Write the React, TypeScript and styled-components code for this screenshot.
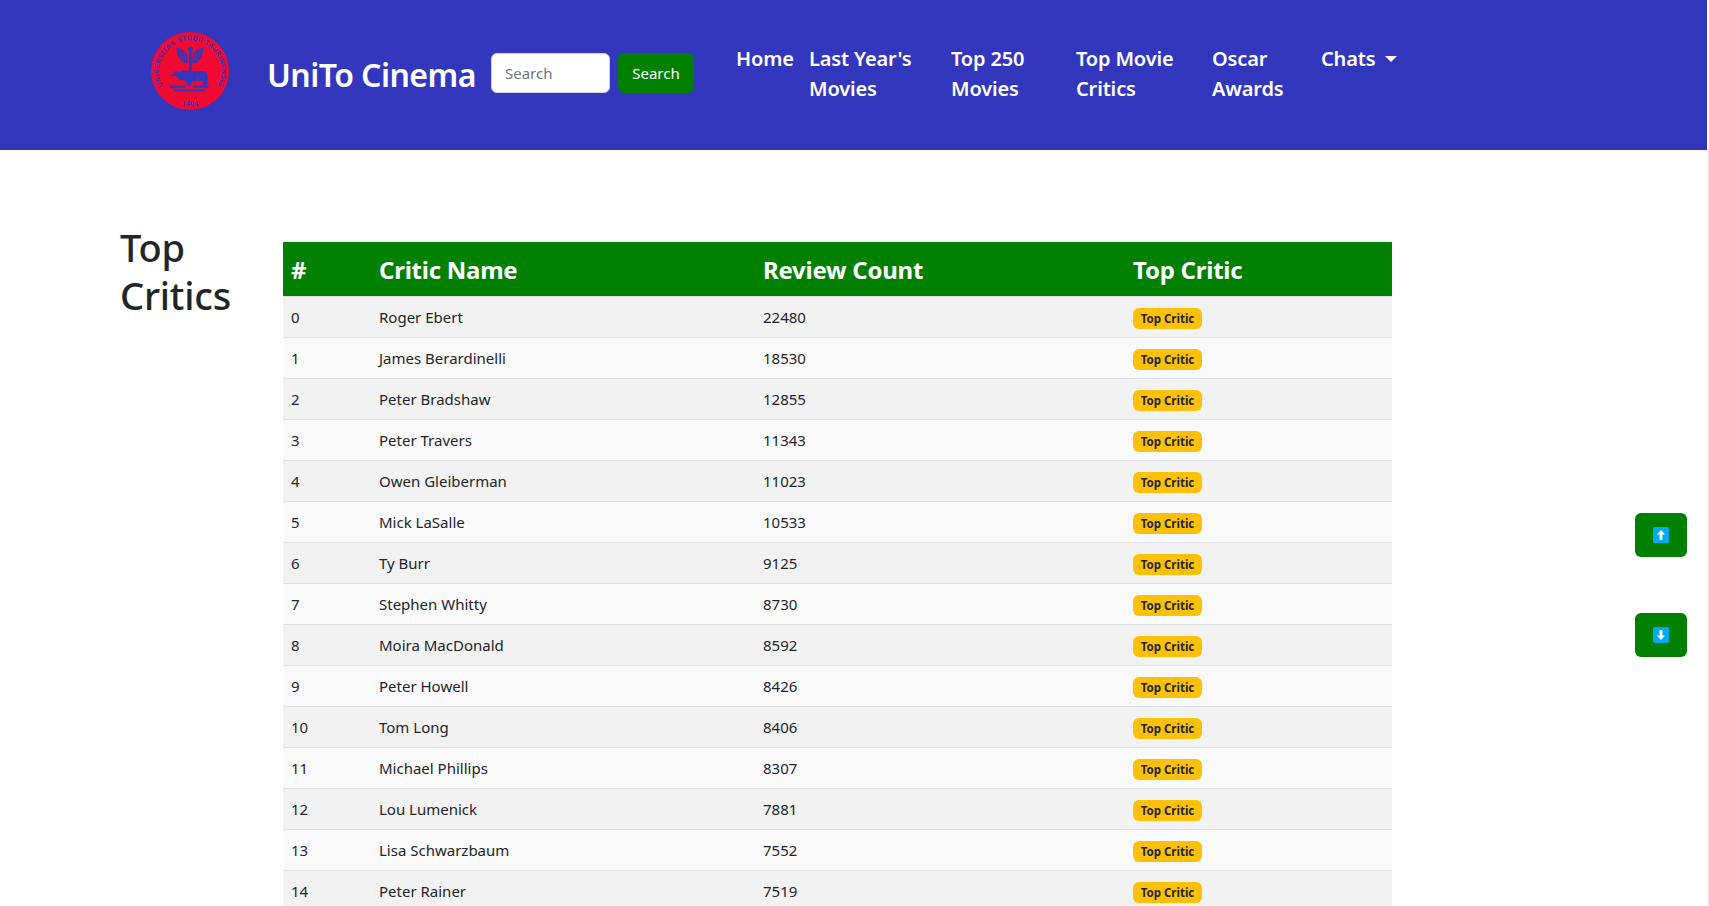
import React from 'react';
import styled, { createGlobalStyle } from 'styled-components';

const FONT = `"Noto Sans", "Open Sans", "Liberation Sans", sans-serif`;

const Global = createGlobalStyle`
  html, body {
    margin: 0;
    height: 906px;
    overflow: hidden;
    background: #fff;
    font-family: ${FONT};
    font-size: 15px;
    line-height: 24px;
    color: #212529;
  }
  * { box-sizing: border-box; }
`;

const Page = styled.div`
  width: 1709px;
  height: 906px;
  overflow: hidden;
`;

const Navbar = styled.nav`
  width: 1707px;
  height: 150px;
  background: #3237bd;
  display: flex;
  align-items: flex-start;
  padding-left: 151px;
`;

const Logo = styled.svg`
  width: 78px;
  height: 78px;
  margin-top: 32px;
  flex: none;
`;

const Brand = styled.a`
  margin: 51px 0 0 38px;
  font-size: 32px;
  line-height: 48px;
  font-weight: 600;
  color: #fff;
  white-space: nowrap;
  width: 224px;
  flex: none;
  letter-spacing: -0.55px;
`;

const SearchForm = styled.form`
  display: flex;
  gap: 8px;
  margin-top: 53px;
  flex: none;
`;

const SearchInput = styled.input`
  width: 119px;
  height: 40px;
  padding: 6px 13px;
  border: 1px solid #ced4da;
  border-radius: 6px;
  font: inherit;
  background: #fff;
  &::placeholder { color: #6c757d; opacity: 1; }
`;

const SearchButton = styled.button`
  width: 76px;
  height: 40px;
  border: 0;
  border-radius: 6px;
  background: #008000;
  color: #fff;
  font: inherit;
  padding: 0;
`;

const NavList = styled.ul`
  list-style: none;
  display: flex;
  margin: 44px 0 0 42px;
  padding: 0;
`;

const NavItem = styled.li<{ $width: number }>`
  width: ${p => p.$width}px;
  font-size: 20px;
  line-height: 30px;
  font-weight: 600;
  letter-spacing: -0.15px;
  color: #fff;
  flex: none;
`;

const Caret = styled.span`
  display: inline-block;
  margin-left: 10px;
  vertical-align: 4px;
  border-top: 6px solid #fff;
  border-left: 6px solid transparent;
  border-right: 6px solid transparent;
`;

const Content = styled.main`
  width: 1709px;
  height: 756px;
  display: flex;
  align-items: flex-start;
  padding: 73px 0 0 120px;
  border-right: 2px solid #f0f0f0;
`;

const Title = styled.h1`
  width: 163px;
  flex: none;
  margin: 0;
  font-size: 38px;
  line-height: 48px;
  font-weight: 500;
  letter-spacing: -0.2px;
`;

const Table = styled.table`
  width: 1109px;
  margin-top: 19px;
  border-collapse: separate;
  border-spacing: 0;
  table-layout: fixed;
`;

const Th = styled.th<{ $width: number }>`
  width: ${p => p.$width}px;
  height: 55px;
  padding: 10px 8px 8px;
  background: #008000;
  border-bottom: 1px solid #dee2e6;
  color: #fff;
  font-size: 24px;
  line-height: 36px;
  font-weight: 700;
  letter-spacing: -0.25px;
  text-align: left;
`;

const Row = styled.tr<{ $odd: boolean }>`
  background: ${p => (p.$odd ? '#f2f2f2' : '#f9f9f9')};
`;

const Td = styled.td`
  height: 41px;
  padding: 8px;
  border-bottom: 1px solid #dee2e6;
`;

const Badge = styled.span`
  display: block;
  width: 69px;
  height: 21px;
  margin-top: 2px;
  border-radius: 6px;
  background: #ffc107;
  color: #212529;
  font-size: 11.5px;
  line-height: 21px;
  font-weight: 700;
  text-align: center;
`;

const ScrollButton = styled.button<{ $top: number }>`
  position: fixed;
  left: 1635px;
  top: ${p => p.$top}px;
  width: 52px;
  height: 44px;
  border: 0;
  border-radius: 6px;
  background: #008000;
  display: flex;
  align-items: center;
  justify-content: center;
  padding: 0;
`;

const critics: [string, number][] = [
  ['Roger Ebert', 22480],
  ['James Berardinelli', 18530],
  ['Peter Bradshaw', 12855],
  ['Peter Travers', 11343],
  ['Owen Gleiberman', 11023],
  ['Mick LaSalle', 10533],
  ['Ty Burr', 9125],
  ['Stephen Whitty', 8730],
  ['Moira MacDonald', 8592],
  ['Peter Howell', 8426],
  ['Tom Long', 8406],
  ['Michael Phillips', 8307],
  ['Lou Lumenick', 7881],
  ['Lisa Schwarzbaum', 7552],
  ['Peter Rainer', 7519],
];

const navLinks: { label: React.ReactNode; width: number }[] = [
  { label: 'Home', width: 73 },
  { label: <>Last Year's<br />Movies</>, width: 142 },
  { label: <>Top 250<br />Movies</>, width: 125 },
  { label: <>Top Movie<br />Critics</>, width: 136 },
  { label: <>Oscar<br />Awards</>, width: 109 },
  { label: <>Chats<Caret /></>, width: 90 },
];

// university seal, redrawn small: ring lettering, eagle, bull and books
const Seal = () => (
  <Logo viewBox="0 0 80 80">
    <defs>
      <path id="sealArc" d="M17 63 A32 32 0 1 1 63 63" />
    </defs>
    <circle cx="40" cy="40" r="40" fill="#f00a32" />
    <text fontSize="7" fontWeight="600" fill="#3237bd" fontFamily="Liberation Sans, sans-serif" letterSpacing="0.35">
      <textPath href="#sealArc" startOffset="50%" textAnchor="middle">UNIVERSITAS STUDII TAURINENSIS</textPath>
    </text>
    <text x="40" y="75.5" fontSize="7" fontWeight="600" fill="#3237bd" textAnchor="middle" fontFamily="Liberation Sans, sans-serif" letterSpacing="0.4">1404</text>
    <g fill="#3237bd">
      <path d="M26 16 q6 1 11 6 l1 10 -4 0 q-7-4-8-16 z" />
      <path d="M54 16 q-6 1 -11 6 l-1 10 4 0 q7-4 8-16 z" />
      <path d="M39 15 l3 0 1 3 -1 2 0 20 -3 0 0-20 -2-2 z" />
      <path d="M20 45 l5-5 5 1 2-2 3 1 18 0 q5 0 5 6 l0 9 -4 0 -1-5 -11 1 -1 4 -4 0 -1-5 -7-1 -3-4 -5 0 z" />
      <rect x="19" y="55" width="17" height="2.6" />
      <rect x="43" y="55" width="16" height="2.6" />
      <rect x="24" y="59" width="31" height="2" />
    </g>
    <g stroke="#f00a32" strokeWidth="0.7" fill="none">
      <path d="M30 19 l3 11 M34 20 l2 10 M50 19 l-3 11 M46 20 l-2 10" />
      <path d="M46 44 q4 3 1 8" />
    </g>
  </Logo>
);

const ArrowTile = ({ down }: { down?: boolean }) => (
  <svg width="16" height="16" viewBox="0 0 16 16">
    <rect width="16" height="16" rx="2" fill="#03a9f4" />
    <g transform={down ? 'rotate(180 8 8)' : undefined}>
      <path d="M8 3 L12 7.5 H9.4 V13 H6.6 V7.5 H4 Z" fill="#fff" />
    </g>
  </svg>
);

export default function App() {
  return (
    <Page>
      <Global />
      <Navbar>
        <Seal />
        <Brand>UniTo Cinema</Brand>
        <SearchForm onSubmit={e => e.preventDefault()}>
          <SearchInput placeholder="Search" />
          <SearchButton>Search</SearchButton>
        </SearchForm>
        <NavList>
          {navLinks.map((link, i) => (
            <NavItem key={i} $width={link.width}>{link.label}</NavItem>
          ))}
        </NavList>
      </Navbar>
      <Content>
        <Title>Top Critics</Title>
        <Table>
          <thead>
            <tr>
              <Th $width={88}>#</Th>
              <Th $width={384}>Critic Name</Th>
              <Th $width={370}>Review Count</Th>
              <Th $width={267}>Top Critic</Th>
            </tr>
          </thead>
          <tbody>
            {critics.map(([name, count], i) => (
              <Row key={name} $odd={i % 2 === 0}>
                <Td>{i}</Td>
                <Td>{name}</Td>
                <Td>{count}</Td>
                <Td><Badge>Top Critic</Badge></Td>
              </Row>
            ))}
          </tbody>
        </Table>
      </Content>
      <ScrollButton $top={513}><ArrowTile /></ScrollButton>
      <ScrollButton $top={613}><ArrowTile down /></ScrollButton>
    </Page>
  );
}
